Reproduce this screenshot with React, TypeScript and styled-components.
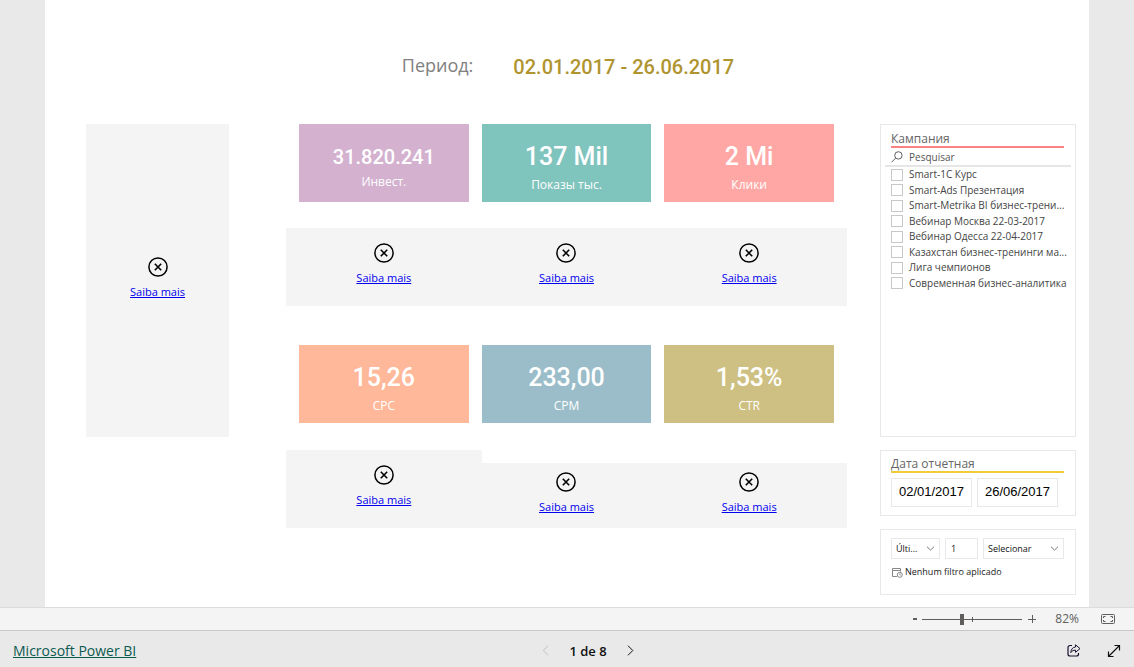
import React, { useState } from "react";
import styled, { createGlobalStyle } from "styled-components";

const ui = `"Segoe UI", "Open Sans", "Noto Sans", sans-serif`;
const din = `Roboto, "Liberation Sans", sans-serif`;

const GlobalStyle = createGlobalStyle`
  *, *::before, *::after { box-sizing: border-box; }
  body { margin: 0; font-family: ${ui}; background: #e9e9e9; }
  button, input, select { font-family: inherit; margin: 0; }
`;

const Page = styled.div`
  min-height: 100vh;
  display: flex;
  flex-direction: column;
`;

const Stage = styled.main`
  flex: 1;
  display: flex;
  padding: 0 45px;
  background: #e9e9e9;
`;

const Canvas = styled.div`
  flex: 1;
  min-width: 0;
  padding: 0 13px 12px 41px;
  background: #fff;
`;

const PeriodHeader = styled.header`
  display: flex;
  justify-content: center;
  gap: 40px;
  height: 124px;
  padding: 51px 0 0;
  margin-right: 26px;
`;

const PeriodLabel = styled.h1`
  margin: 0;
  font-size: 18px;
  font-weight: 400;
  line-height: 28px;
  color: #808080;
`;

const PeriodDates = styled.div`
  font-family: ${din};
  font-size: 20px;
  font-weight: 500;
  line-height: 32px;
  color: #b09430;
`;

const Content = styled.div`
  display: grid;
  grid-template-columns: 143px minmax(0, 1fr) 196px;
  align-items: start;
`;

const Metrics = styled.section`
  display: flex;
  flex-direction: column;
  padding: 0 33px 0 57px;
`;

const MetricRow = styled.div<{ $gap: number }>`
  display: grid;
  grid-template-columns: repeat(3, minmax(0, 1fr));
  column-gap: 13px;
  align-items: end;
  padding: 0 13px;
  margin-bottom: ${(p) => p.$gap}px;
`;

const Kpi = styled.div<{ $color: string }>`
  height: 78px;
  display: flex;
  flex-direction: column;
  align-items: center;
  justify-content: center;
  padding-top: 12px;
  background: ${(p) => p.$color};
  color: #fff;
`;

const KpiValue = styled.div<{ $small?: boolean }>`
  font-family: ${din};
  font-weight: 500;
  font-size: ${(p) => (p.$small ? 20 : 25)}px;
  line-height: ${(p) => (p.$small ? 26 : 32)}px;
`;

const KpiLabel = styled.div`
  font-size: 12px;
  line-height: 24px;
`;

const ErrorTile = styled.div<{ $height: number; $wide?: boolean }>`
  height: ${(p) => p.$height}px;
  margin: 0 ${(p) => (p.$wide ? -13 : 0)}px;
  display: flex;
  flex-direction: column;
  align-items: center;
  justify-content: center;
  gap: 6px;
  padding-bottom: 4px;
  background: #f4f4f4;
`;

const LearnMore = styled.a`
  font-size: 11px;
  line-height: 18px;
  color: #0000ee;
`;

const Filters = styled.aside`
  display: flex;
  flex-direction: column;
  gap: 13px;
`;

const FilterCard = styled.section<{ $height: number; $compact?: boolean }>`
  min-height: ${(p) => p.$height}px;
  padding: ${(p) => (p.$compact ? 5 : 6)}px 4px;
  border: 1px solid #e8e8e8;
  background: #fff;
`;

const FilterTitle = styled.h2<{ $line: string }>`
  margin: 0 7px 0 6px;
  height: 17px;
  border-bottom: 2px solid ${(p) => p.$line};
  font-size: 12px;
  font-weight: 400;
  line-height: 15px;
  color: #666;
`;

const SearchBox = styled.label`
  display: flex;
  align-items: center;
  gap: 6px;
  height: 19px;
  padding: 0 0 0 6px;
  border-bottom: 2px solid #e6e6e6;
  color: #605e5c;
`;

const SearchInput = styled.input`
  flex: 1;
  min-width: 0;
  padding: 0;
  border: 0;
  outline: 0;
  background: none;
  font-size: 10px;
  line-height: 14px;
  color: #444;
  &::placeholder { color: #555; opacity: 1; }
`;

const OptionList = styled.div`
  height: 124px;
  display: flex;
  flex-direction: column;
`;

const Option = styled.label`
  flex: 1;
  display: flex;
  align-items: center;
  gap: 6px;
  padding-left: 6px;
  font-size: 10px;
  line-height: 15px;
  white-space: nowrap;
  color: #444;
`;

const Tick = styled.input`
  appearance: none;
  flex: none;
  width: 12px;
  height: 12px;
  border: 1px solid #c8c8c8;
  background: #fff;
  &:checked { background: #666; }
`;

const Fields = styled.div<{ $top: number }>`
  display: flex;
  gap: 5px;
  margin: ${(p) => p.$top}px 7px 0 6px;
`;

const DateInput = styled.input`
  width: 81px;
  height: 29px;
  padding: 0 0 3px;
  border: 1px solid #e8e8e8;
  background: #fff;
  text-align: center;
  font-size: 13px;
  color: #000;
  && { font-family: "Liberation Sans", Arial, sans-serif; }
`;

const SelectBox = styled.div<{ $grow?: boolean }>`
  display: flex;
  align-items: center;
  flex: ${(p) => (p.$grow ? "1" : "0 0 49px")};
  min-width: 0;
  height: 21px;
  border: 1px solid #e8e8e8;
  padding-right: 4px;
  color: #777;
`;

const Select = styled.select`
  appearance: none;
  flex: 1;
  min-width: 0;
  height: 19px;
  padding: 0 0 0 4px;
  border: 0;
  background: none;
  font-size: 9px;
  color: #111;
`;

const CountInput = styled.input`
  width: 33px;
  height: 21px;
  padding: 0 0 0 5px;
  border: 1px solid #e8e8e8;
  font-size: 9px;
  color: #111;
`;

const FilterNote = styled.p`
  display: flex;
  align-items: center;
  gap: 2px;
  margin: 6px 0 0 7px;
  font-size: 9px;
  line-height: 14px;
  color: #222;
`;

const ZoomBar = styled.div`
  display: flex;
  align-items: center;
  justify-content: flex-end;
  height: 24px;
  padding-right: 19px;
  border-top: 1px solid #dcdcdc;
  border-bottom: 1px solid #c8c8c8;
  background: #f4f4f4;
  color: #605e5c;
`;

const PlainButton = styled.button`
  display: flex;
  align-items: center;
  justify-content: center;
  padding: 0;
  border: 0;
  background: none;
  color: inherit;
  &:disabled { color: #c0c0c0; }
`;

const ZoomButton = styled(PlainButton)<{ $width: number }>`
  width: ${(p) => p.$width}px;
  height: 20px;
`;

const ZoomRange = styled.input`
  appearance: none;
  width: 100px;
  height: 12px;
  background:
    linear-gradient(#605e5c, #605e5c) 50px center / 1px 5px no-repeat,
    linear-gradient(#605e5c, #605e5c) left center / 100% 1px no-repeat;
  &::-webkit-slider-thumb {
    appearance: none;
    width: 4px;
    height: 11px;
    background: #605e5c;
  }
`;

const ZoomValue = styled.output`
  width: 37px;
  margin-right: 22px;
  text-align: right;
  font-size: 12px;
  line-height: 20px;
`;

const Footer = styled.footer`
  display: grid;
  grid-template-columns: 1fr auto 1fr;
  align-items: center;
  height: 36px;
  padding: 3px 13px 0 13px;
  background: #e9e9e9;
  color: #111;
`;

const BrandLink = styled.a`
  justify-self: start;
  font-size: 14px;
  line-height: 20px;
  color: #0b5a50;
`;

const Pager = styled.nav`
  display: flex;
  align-items: center;
  gap: 20px;
  margin-left: 42px;
`;

const PageCount = styled.span`
  font-size: 13px;
  font-weight: 600;
  line-height: 20px;
`;

const Actions = styled.div`
  justify-self: end;
  display: flex;
  gap: 26px;
`;

const ErrorIcon = () => (
  <svg width="20" height="20" viewBox="0 0 20 20" fill="none" stroke="#000" aria-hidden>
    <circle cx="10" cy="10" r="9.1" strokeWidth="1.5" />
    <path d="M6.8 6.8l6.4 6.4M13.2 6.8l-6.4 6.4" strokeWidth="1.6" />
  </svg>
);

const Chevron = ({ d, w = 9, h = 5 }: { d: string; w?: number; h?: number }) => (
  <svg width={w} height={h} viewBox={`0 0 ${w} ${h}`} fill="none" stroke="currentColor" aria-hidden>
    <path d={d} />
  </svg>
);

const DOWN = "M1 .7l3.5 3.4L8 .7";

const Unavailable = ({ height, wide }: { height: number; wide?: boolean }) => (
  <ErrorTile $height={height} $wide={wide}>
    <ErrorIcon />
    <LearnMore href="#">Saiba mais</LearnMore>
  </ErrorTile>
);

type KpiItem = { value: string; label: string; color: string; small?: boolean };

const topKpis: KpiItem[] = [
  { value: "31.820.241", label: "Инвест.", color: "#d3b1cf", small: true },
  { value: "137 Mil", label: "Показы тыс.", color: "#80c4be" },
  { value: "2 Mi", label: "Клики", color: "#ffa7a5" },
];

const bottomKpis: KpiItem[] = [
  { value: "15,26", label: "CPC", color: "#ffb899" },
  { value: "233,00", label: "CPM", color: "#9abdc9" },
  { value: "1,53%", label: "CTR", color: "#cebf82" },
];

const campaigns = [
  "Smart-1С Курс",
  "Smart-Ads Презентация",
  "Smart-Metrika BI бизнес-трени...",
  "Вебинар Москва 22-03-2017",
  "Вебинар Одесса 22-04-2017",
  "Казахстан бизнес-тренинги ма...",
  "Лига чемпионов",
  "Современная бизнес-аналитика",
];

const KpiRow = ({ items, gap }: { items: KpiItem[]; gap: number }) => (
  <MetricRow $gap={gap}>
    {items.map((k) => (
      <Kpi key={k.label} $color={k.color}>
        <KpiValue $small={k.small}>{k.value}</KpiValue>
        <KpiLabel>{k.label}</KpiLabel>
      </Kpi>
    ))}
  </MetricRow>
);

export default function App() {
  const [zoom, setZoom] = useState(82);

  return (
    <Page>
      <GlobalStyle />
      <Stage>
        <Canvas>
          <PeriodHeader>
            <PeriodLabel>Период:</PeriodLabel>
            <PeriodDates>02.01.2017 - 26.06.2017</PeriodDates>
          </PeriodHeader>
          <Content>
            <Unavailable height={313} />
            <Metrics>
              <KpiRow items={topKpis} gap={26} />
              <MetricRow $gap={39}>
                <Unavailable height={78} wide />
                <Unavailable height={78} wide />
                <Unavailable height={78} wide />
              </MetricRow>
              <KpiRow items={bottomKpis} gap={27} />
              <MetricRow $gap={0}>
                <Unavailable height={78} wide />
                <Unavailable height={65} wide />
                <Unavailable height={65} wide />
              </MetricRow>
            </Metrics>
            <Filters>
              <FilterCard $height={313}>
                <FilterTitle $line="#fb8281">Кампания</FilterTitle>
                <SearchBox>
                  <svg width="12" height="12" viewBox="0 0 12 12" fill="none" stroke="currentColor" aria-hidden>
                    <circle cx="7.4" cy="4.4" r="3.7" />
                    <path d="M4.7 7.1L.5 11.3" />
                  </svg>
                  <SearchInput type="text" placeholder="Pesquisar" aria-label="Pesquisar" />
                </SearchBox>
                <OptionList>
                  {campaigns.map((c) => (
                    <Option key={c}>
                      <Tick type="checkbox" />
                      {c}
                    </Option>
                  ))}
                </OptionList>
              </FilterCard>
              <FilterCard $height={66} $compact>
                <FilterTitle $line="#f2cb3a">Дата отчетная</FilterTitle>
                <Fields $top={5}>
                  <DateInput type="text" defaultValue="02/01/2017" aria-label="Data inicial" />
                  <DateInput type="text" defaultValue="26/06/2017" aria-label="Data final" />
                </Fields>
              </FilterCard>
              <FilterCard $height={66}>
                <Fields $top={2}>
                  <SelectBox>
                    <Select aria-label="Período relativo">
                      <option>Últi...</option>
                    </Select>
                    <Chevron d={DOWN} />
                  </SelectBox>
                  <CountInput type="text" defaultValue="1" aria-label="Quantidade" />
                  <SelectBox $grow>
                    <Select aria-label="Unidade">
                      <option>Selecionar</option>
                    </Select>
                    <Chevron d={DOWN} />
                  </SelectBox>
                </Fields>
                <FilterNote>
                  <svg width="11" height="11" viewBox="0 0 11 11" fill="none" stroke="#888" aria-hidden>
                    <path d="M5 9.500H.5v-8h8v3M.5 3.500h8" />
                    <circle cx="7.800" cy="7.800" r="2.500" />
                    <path d="M7.800 6.300v1.600h1.300" strokeWidth=".8" />
                  </svg>
                  Nenhum filtro aplicado
                </FilterNote>
              </FilterCard>
            </Filters>
          </Content>
        </Canvas>
      </Stage>
      <ZoomBar>
        <ZoomButton $width={14} type="button" aria-label="Reduzir" onClick={() => setZoom(Math.max(10, zoom - 10))}>
          <svg width="4" height="2" viewBox="0 0 4 2" aria-hidden><path d="M0 0h4v2H0z" fill="currentColor" /></svg>
        </ZoomButton>
        <ZoomRange
          type="range"
          min={10}
          max={190}
          value={zoom}
          onChange={(e) => setZoom(Number(e.target.value))}
          aria-label="Zoom"
        />
        <ZoomButton $width={20} type="button" aria-label="Ampliar" onClick={() => setZoom(Math.min(190, zoom + 10))}>
          <svg width="8" height="8" viewBox="0 0 8 8" stroke="currentColor" aria-hidden><path d="M0 4.500h8M4.500 0v8" /></svg>
        </ZoomButton>
        <ZoomValue>{zoom}%</ZoomValue>
        <PlainButton type="button" aria-label="Ajustar à página">
          <svg width="14" height="10" viewBox="0 0 14 10" fill="none" stroke="currentColor" aria-hidden>
            <rect x=".5" y=".5" width="13" height="9" rx="1" />
            <path d="M4.500 2.500h-2v1.500M9.500 2.500h2v1.500M4.500 7.500h-2V6M9.500 7.500h2V6" />
          </svg>
        </PlainButton>
      </ZoomBar>
      <Footer>
        <BrandLink href="#">Microsoft Power BI</BrandLink>
        <Pager aria-label="Páginas">
          <PlainButton type="button" disabled aria-label="Página anterior">
            <Chevron w={7} h={11} d="M6 .7L1.2 5.5 6 10.3" />
          </PlainButton>
          <PageCount>1 de 8</PageCount>
          <PlainButton type="button" aria-label="Próxima página">
            <Chevron w={7} h={11} d="M1 .7l4.8 4.8L1 10.3" />
          </PlainButton>
        </Pager>
        <Actions>
          <PlainButton type="button" aria-label="Compartilhar">
            <svg width="14" height="13" viewBox="0 0 14 13" fill="none" stroke="#1b1030" strokeLinejoin="round" aria-hidden>
              <path d="M5 1.500H3a2 2 0 0 0-2 2V10a2 2 0 0 0 2 2h6.500a2 2 0 0 0 2-2V9" strokeWidth="1.2" />
              <path d="M8.500.8L13 4.600 8.500 8.300V6.200C6.300 6.100 4.800 7 3.800 8.600 4 5.500 5.500 3.200 8.500 3z" />
            </svg>
          </PlainButton>
          <PlainButton type="button" aria-label="Tela inteira">
            <svg width="14" height="14" viewBox="0 0 14 14" fill="none" stroke="#111" aria-hidden>
              <path d="M1.500 12.500l11-11M7.500 1.500h5v5M1.500 7.500v5h5" strokeWidth="1.2" />
            </svg>
          </PlainButton>
        </Actions>
      </Footer>
    </Page>
  );
}
